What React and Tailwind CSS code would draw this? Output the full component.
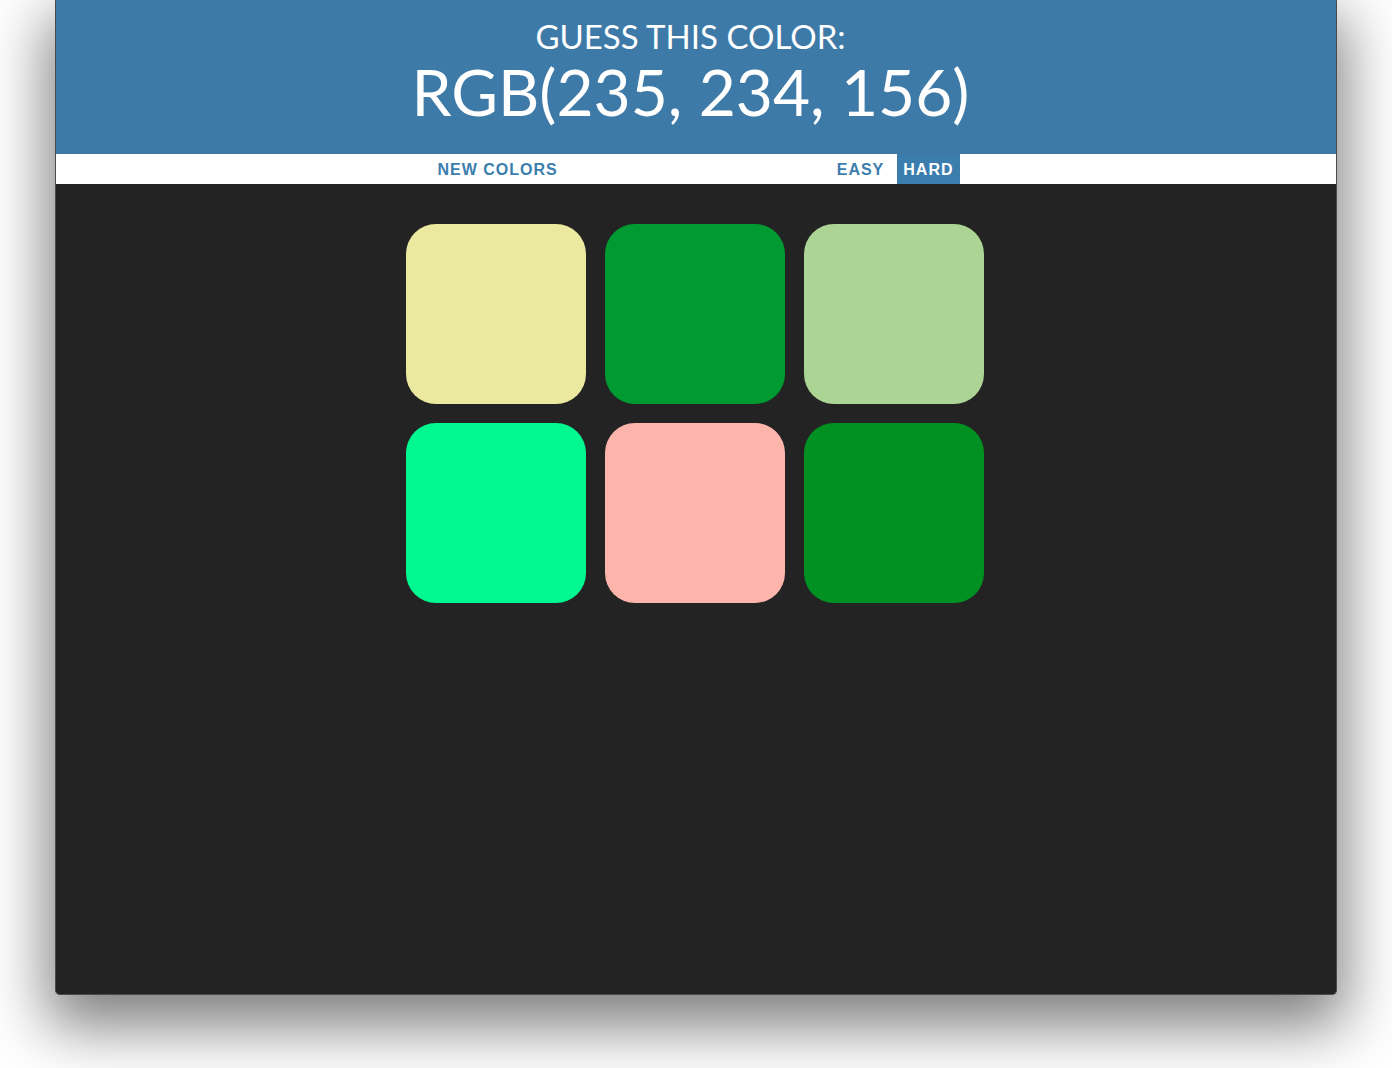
export default function App() {
  const tiles = ["#ebe9a0", "#009a33", "#abd495", "#00f890", "#fdb4ab", "#009122"];

  return (
    <div className="h-[1068px] w-full bg-white pl-[55px]" style={{ fontFamily: "Lato, 'Open Sans', sans-serif" }}>
      <div className="flex h-[995px] w-[1282px] flex-col overflow-hidden rounded-b-[5px] border border-t-0 border-[#4a4a4a] bg-[#232323] shadow-[0_24px_60px_8px_rgba(0,0,0,0.5)]">
        <header className="flex h-[154px] flex-col items-center bg-[#3e7aa7] pr-[11px] pt-[16px] text-white">
          <h2 className="text-[33px] font-normal uppercase leading-[40px]">Guess this color:</h2>
          <h1 className="mt-[-1px] text-[64px] font-normal leading-[74px]">RGB(235, 234, 156)</h1>
        </header>

        <nav className="flex h-[30px] items-stretch justify-center bg-white pr-[2px] pt-[1px] text-[16px] font-bold uppercase tracking-[1px]" style={{ fontFamily: "'Liberation Sans', Arial, sans-serif" }}>
          <button className="px-[7px] uppercase text-[#3b7eae]">New Colors</button>
          <span className="w-[266px]" />
          <button className="px-[6px] uppercase text-[#3b7eae]">Easy</button>
          <button className="ml-[7px] mt-[-1px] bg-[#3b7eae] px-[6px] pt-[1px] uppercase text-white">Hard</button>
        </nav>

        <main className="ml-[350px] mt-[40px] grid w-[578px] grid-cols-3 gap-[19px]">
          {tiles.map((c, i) => (
            <div key={i} className="h-[180px] w-[180px] rounded-[30px]" style={{ backgroundColor: c }} />
          ))}
        </main>
      </div>
    </div>
  );
}
